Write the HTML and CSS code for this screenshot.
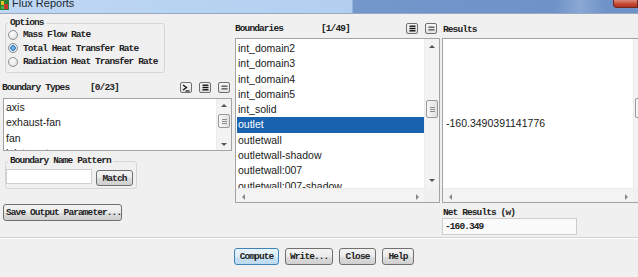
FILE: index.html
```html
<!DOCTYPE html>
<html lang="en">
<head>
  <meta charset="UTF-8" />
  <meta name="viewport" content="width=device-width, initial-scale=1.0"/>
  <title>Flux Reports</title>
  <link rel="stylesheet" href="styles.css">
</head>
<body>
  <div class="titlebar">
    <svg class="app-icon" width="9" height="10" viewBox="0 0 9 10">
      <rect x="0" y="0" width="9" height="10" fill="#2f7d32"/>
      <rect x="1" y="1" width="3" height="4" fill="#e6c229"/>
      <rect x="4" y="4" width="4" height="5" fill="#c8372d"/>
      <rect x="1" y="6" width="3" height="3" fill="#3fb44b"/>
    </svg>
    <span class="title">Flux Reports</span>
    <span class="close-btn"></span>
  </div>

  <div class="panel">
    <div class="columns">
      <div class="col col-left">
        <fieldset class="group options">
          <legend>Options</legend>
          <label class="radio"><span class="dot"></span>Mass Flow Rate</label>
          <label class="radio"><span class="dot checked"></span>Total Heat Transfer Rate</label>
          <label class="radio"><span class="dot"></span>Radiation Heat Transfer Rate</label>
        </fieldset>

        <div class="list-head">
          <span class="lbl types-lbl">Boundary Types</span>
          <span class="count">[0/23]</span>
          <span class="tools">
            <button class="tool" type="button">
              <svg width="8" height="8" viewBox="0 0 8 8"><path d="M1 1 L4.5 3.5 L1 6" fill="none" stroke="#111" stroke-width="1.3"/><path d="M3.5 7 H7.5" stroke="#111" stroke-width="1.2"/></svg>
            </button>
            <button class="tool" type="button">
              <svg width="7" height="7" viewBox="0 0 7 7"><rect x="0.5" y="0.5" width="6" height="1.4" fill="#111"/><rect x="0.5" y="2.8" width="6" height="1.4" fill="#111"/><rect x="0.5" y="5.1" width="6" height="1.4" fill="#111"/></svg>
            </button>
            <button class="tool" type="button">
              <svg width="7" height="7" viewBox="0 0 7 7"><rect x="0.5" y="1.6" width="6" height="1.1" fill="#333"/><rect x="0.5" y="4.3" width="6" height="1.1" fill="#333"/></svg>
            </button>
          </span>
        </div>

        <div class="listbox types">
          <ul class="items">
            <li>axis</li>
            <li>exhaust-fan</li>
            <li>fan</li>
            <li>inlet-vent</li>
          </ul>
          <div class="vscroll short">
            <span class="arr up"></span>
            <div class="track"><div class="thumb t-types"><span class="grip"></span></div></div>
            <span class="arr down"></span>
          </div>
        </div>

        <fieldset class="group pattern">
          <legend>Boundary Name Pattern</legend>
          <div class="pattern-row">
            <input class="field" type="text" />
            <button class="btn match" type="button">Match</button>
          </div>
        </fieldset>

        <button class="btn save" type="button">Save Output Parameter...</button>
      </div>

      <div class="col col-mid">
        <div class="list-head">
          <span class="lbl bnd-lbl">Boundaries</span>
          <span class="count">[1/49]</span>
          <span class="tools">
            <button class="tool" type="button">
              <svg width="7" height="7" viewBox="0 0 7 7"><rect x="0.5" y="0.5" width="6" height="1.4" fill="#111"/><rect x="0.5" y="2.8" width="6" height="1.4" fill="#111"/><rect x="0.5" y="5.1" width="6" height="1.4" fill="#111"/></svg>
            </button>
            <button class="tool" type="button">
              <svg width="7" height="7" viewBox="0 0 7 7"><rect x="0.5" y="1.6" width="6" height="1.1" fill="#333"/><rect x="0.5" y="4.3" width="6" height="1.1" fill="#333"/></svg>
            </button>
          </span>
        </div>

        <div class="listbox boundaries">
          <ul class="items">
            <li>int_domain2</li>
            <li>int_domain3</li>
            <li>int_domain4</li>
            <li>int_domain5</li>
            <li>int_solid</li>
            <li class="selected">outlet</li>
            <li>outletwall</li>
            <li>outletwall-shadow</li>
            <li>outletwall:007</li>
            <li>outletwall:007-shadow</li>
          </ul>
          <div class="vscroll">
            <span class="arr up"></span>
            <div class="track"><div class="thumb t-bnd"><span class="grip"></span></div></div>
            <span class="arr down"></span>
          </div>
          <div class="hscroll">
            <span class="arr left"></span>
            <span class="arr right"></span>
          </div>
          <div class="corner"></div>
        </div>
      </div>

      <div class="col col-right">
        <div class="list-head results-head">
          <span class="lbl">Results</span>
        </div>
        <div class="listbox results">
          <div class="result-text">-160.3490391141776</div>
          <div class="vscroll">
            <span class="arr up"></span>
            <div class="track"><div class="thumb t-res"><span class="grip"></span></div></div>
            <span class="arr down"></span>
          </div>
          <div class="hscroll">
            <span class="arr left"></span>
            <span class="arr right"></span>
          </div>
          <div class="corner"></div>
        </div>
        <div class="net-lbl">Net Results (w)</div>
        <div class="net-value">-160.349</div>
      </div>
    </div>

    <div class="separator"></div>

    <div class="actions">
      <button class="btn default" type="button">Compute</button>
      <button class="btn" type="button">Write...</button>
      <button class="btn" type="button">Close</button>
      <button class="btn" type="button">Help</button>
    </div>
  </div>
</body>
</html>
```

FILE: styles.css
```css
* {
  box-sizing: border-box;
}

body {
  margin: 0;
  width: 638px;
  height: 277px;
  overflow: hidden;
  background: #f0f0f0;
  font-family: "Liberation Mono", monospace;
  font-size: 9.5px;
  font-weight: bold;
  letter-spacing: -0.9px;
  color: #222;
}

/* title bar */
.titlebar {
  display: flex;
  height: 14px;
  border-bottom: 1px solid #97a8bf;
  background: linear-gradient(to right, #bed8f4 0, #b3cff0 352px, #7397cb 353px, #6f93c8 555px, #8ba8d4 580px, #6f93c8 605px);
}

.app-icon {
  flex: none;
}

.title {
  margin-left: 3px;
  margin-top: -3px;
  font: normal 11px/12px "Liberation Sans", sans-serif;
  letter-spacing: 0;
  color: #1e2733;
}

.close-btn {
  margin-left: auto;
  width: 25px;
  height: 8px;
  border: 1px solid #6d2b20;
  border-top: 0;
  border-radius: 0 0 0 4px;
  background: linear-gradient(#dc8a7a, #c4452f 60%, #b13320);
}

/* layout */
.columns {
  display: flex;
  height: 221px;
}

.col {
  flex: none;
}

.col-left {
  width: 233px;
}

.col-mid {
  width: 205px;
  margin-left: 2px;
}

.col-right {
  width: 207px;
  margin-left: 2px;
}

/* groups */
.group {
  margin: 0;
  border: 1px solid #d6d6d6;
  border-radius: 3px;
  min-inline-size: 0;
}

.group legend {
  line-height: 10px;
  padding: 0 2px;
}

.options {
  margin: 4px 0 0 5px;
  width: 160px;
  padding: 0 0 3px 2px;
}

.radio {
  display: flex;
  align-items: center;
  height: 13.5px;
}

.dot {
  width: 10px;
  height: 10px;
  margin: 0 5px 0 0;
  border: 1px solid #8e9092;
  border-radius: 50%;
  background: radial-gradient(circle at 40% 35%, #ffffff, #d8d8d8);
}

.dot.checked {
  background: radial-gradient(circle, #9fd0f5 0, #2f78bf 2.5px, #d8e4ee 3px, #eef3f7);
}

/* list headers */
.list-head {
  display: flex;
  align-items: center;
  height: 13px;
  margin-top: 8.5px;
}

.col-mid .list-head,
.results-head {
  height: 14px;
  margin-top: 7px;
}

.types-lbl {
  width: 90px;
  padding-left: 2px;
}

.bnd-lbl {
  width: 86px;
}

.results-head .lbl {
  padding: 3px 0 0 1px;
}

.tools {
  display: flex;
  gap: 7px;
  margin-left: auto;
  margin-right: 3px;
}

.tool {
  display: flex;
  align-items: center;
  justify-content: center;
  width: 12px;
  height: 11px;
  padding: 0;
  border: 1px solid #6f6f6f;
  border-radius: 2px;
  background: linear-gradient(#f6f6f6, #e2e2e2);
}

/* list boxes */
.listbox {
  border: 1px solid #a3a3a3;
  background: #fff;
}

.types {
  display: flex;
  width: 229px;
  height: 53px;
  margin: 4px 0 0 3px;
}

.boundaries,
.results {
  display: grid;
  grid-template-columns: 1fr 15px;
  grid-template-rows: 1fr 14px;
  height: 165px;
  margin-top: 3px;
}

.boundaries {
  width: 205px;
}

.results {
  width: 207px;
}

.items {
  flex: 1;
  min-width: 0;
  margin: 0;
  padding: 1px 0 0 1px;
  list-style: none;
  overflow: hidden;
}

.items li {
  padding-left: 1px;
  font: normal 10.5px/15.3px "Liberation Sans", sans-serif;
  letter-spacing: 0;
  color: #1a1a1a;
  white-space: nowrap;
}

.boundaries .items {
  padding-top: 2px;
}

.items li.selected {
  background: #1763b0;
  color: #fff;
}

.result-text {
  padding: 77px 0 0 3px;
  font: normal 10.5px/15px "Liberation Sans", sans-serif;
  letter-spacing: 0;
  color: #1a1a1a;
  overflow: hidden;
}

/* scrollbars */
.vscroll {
  display: flex;
  flex-direction: column;
  width: 15px;
  background: #f3f3f3;
  border-left: 1px solid #ececec;
}

.hscroll {
  display: flex;
  justify-content: space-between;
  background: #f3f3f3;
  border-top: 1px solid #ececec;
}

.corner {
  background: #f0f0f0;
}

.arr {
  display: flex;
  align-items: center;
  justify-content: center;
  flex: none;
  width: 14px;
  height: 15px;
}

.short .arr {
  height: 12px;
}

.arr::before {
  content: "";
  border: 3px solid transparent;
}

.arr.up::before {
  border-top: 0;
  border-bottom: 3px solid #555;
}

.arr.down::before {
  border-bottom: 0;
  border-top: 3px solid #555;
}

.arr.left::before {
  border-left: 0;
  border-right: 3px solid #888;
}

.arr.right::before {
  border-right: 0;
  border-left: 3px solid #888;
}

.track {
  flex: 1;
}

.thumb {
  display: flex;
  align-items: center;
  justify-content: center;
  margin: 0 1px;
  border: 1px solid #999;
  border-radius: 2px;
  background: linear-gradient(to right, #f7f7f7, #e1e1e1);
}

.t-types {
  margin-top: 3px;
  height: 14px;
}

.t-bnd {
  margin-top: 46px;
  height: 18px;
}

.t-res {
  margin-top: 44px;
  height: 20px;
}

.grip {
  width: 5px;
  height: 5px;
  background: repeating-linear-gradient(#8c8c8c 0 1px, transparent 1px 2px);
}

/* name pattern */
.pattern {
  width: 132px;
  margin: 5px 0 0 5px;
  padding: 0 0 2px 0;
}

.pattern legend {
  margin-left: 2px;
}

.pattern-row {
  display: flex;
  align-items: flex-start;
  padding-top: 2px;
}

.field {
  width: 86px;
  height: 15px;
  margin: 1px 0 0 0;
  border: 1px solid #cfcfcf;
  background: #fff;
}

/* buttons */
.btn {
  height: 17px;
  padding: 0 4px;
  border: 1px solid #707070;
  border-radius: 3px;
  background: linear-gradient(#f3f3f3 0, #ebebeb 50%, #dddddd 51%, #d0d0d0);
  font: inherit;
  letter-spacing: inherit;
  color: #222;
  white-space: nowrap;
}

.match {
  width: 37px;
  height: 16px;
  margin: 2px 0 0 4px;
}

.save {
  width: 119px;
  margin: 15px 0 0 3px;
  padding: 0 2px;
  text-align: left;
}

.btn.default {
  border-color: #3f83b8;
  background: linear-gradient(#eaf5fc 0, #dcedf8 50%, #cce4f6 51%, #bcd9ef);
}

/* results */
.net-lbl {
  margin-top: 5px;
  padding-left: 1px;
  line-height: 10px;
}

.net-value {
  width: 135px;
  height: 17px;
  padding-left: 2px;
  border: 1px solid #cdcdcd;
  background: #fafafa;
  line-height: 15px;
}

/* bottom bar */
.separator {
  margin-top: 2px;
  border-top: 1px solid #d3d3d3;
  border-bottom: 1px solid #fff;
}

.actions {
  display: flex;
  justify-content: center;
  gap: 6px;
  padding: 9px 0 0 10px;
}

.actions .btn:nth-child(1) { width: 45px; }
.actions .btn:nth-child(2) { width: 48px; }
.actions .btn:nth-child(3) { width: 37px; }
.actions .btn:nth-child(4) { width: 32px; }
```
